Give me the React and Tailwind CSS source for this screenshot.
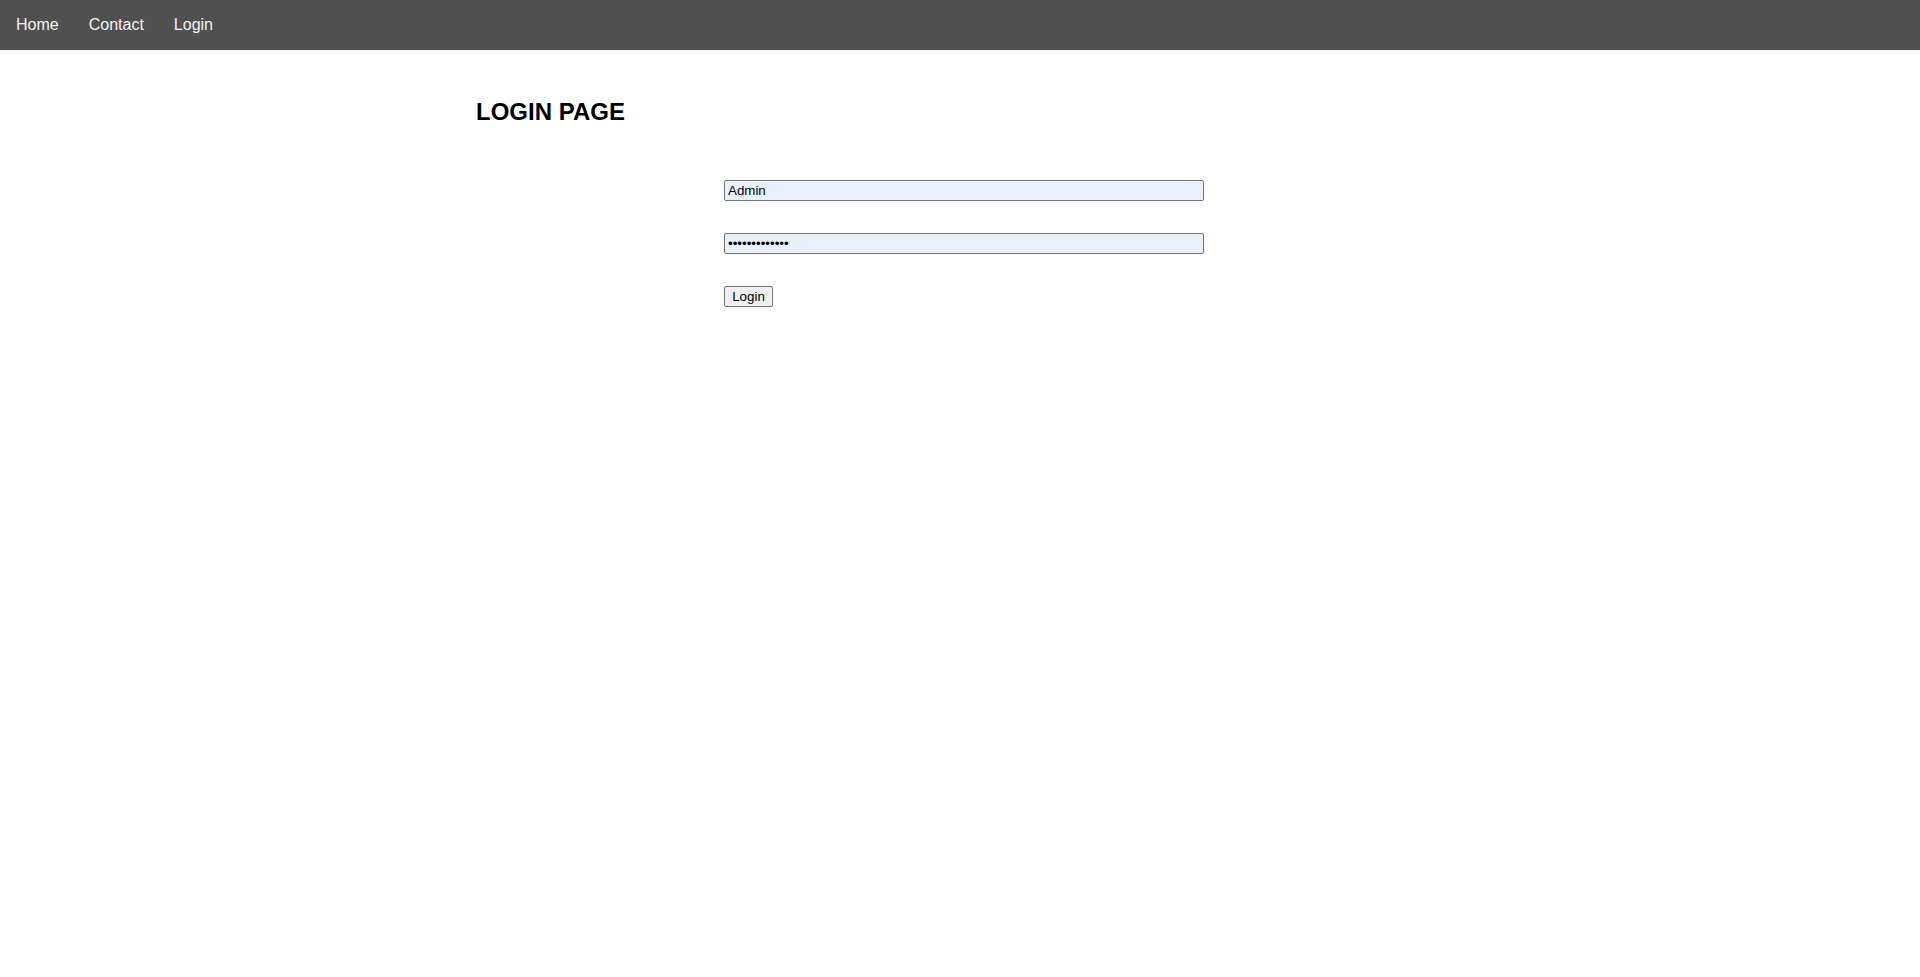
import React from "react";

export default function App() {
  return (
    <div className="min-h-[977px] w-full bg-white font-['Liberation_Sans',Arial,sans-serif] text-black">
      <nav className="flex h-[50px] items-center bg-[#505050] pl-[1px]">
        <a href="#" className="px-[15px] text-[16px] leading-[18px] text-[#f2f2f2] no-underline">Home</a>
        <a href="#" className="px-[15px] text-[16px] leading-[18px] text-[#f2f2f2] no-underline">Contact</a>
        <a href="#" className="px-[15px] text-[16px] leading-[18px] text-[#f2f2f2] no-underline">Login</a>
      </nav>
      <div className="pl-[476px] pt-[48px]">
        <h2 className="text-[24px] font-bold leading-[28px]">LOGIN PAGE</h2>
      </div>
      <form className="mt-[54px] flex flex-col gap-[32px] pl-[724px]" onSubmit={(e) => e.preventDefault()}>
        <input
          type="text"
          defaultValue="Admin"
          className="box-border h-[21px] w-[480px] rounded-[2px] border border-[#767676] bg-[#e8f0fe] px-[3px] text-[13.33px] text-black outline-none"
        />
        <input
          type="password"
          defaultValue="adminpassword"
          className="box-border h-[21px] w-[480px] rounded-[2px] border border-[#767676] bg-[#e8f0fe] px-[3px] text-[13.33px] text-black outline-none"
        />
        <div className="flex">
          <button
            type="submit"
            className="box-border h-[21px] w-[49px] rounded-[2px] border border-[#767676] bg-[#efefef] text-[13.33px] leading-[15px] text-black"
          >
            Login
          </button>
        </div>
      </form>
    </div>
  );
}
